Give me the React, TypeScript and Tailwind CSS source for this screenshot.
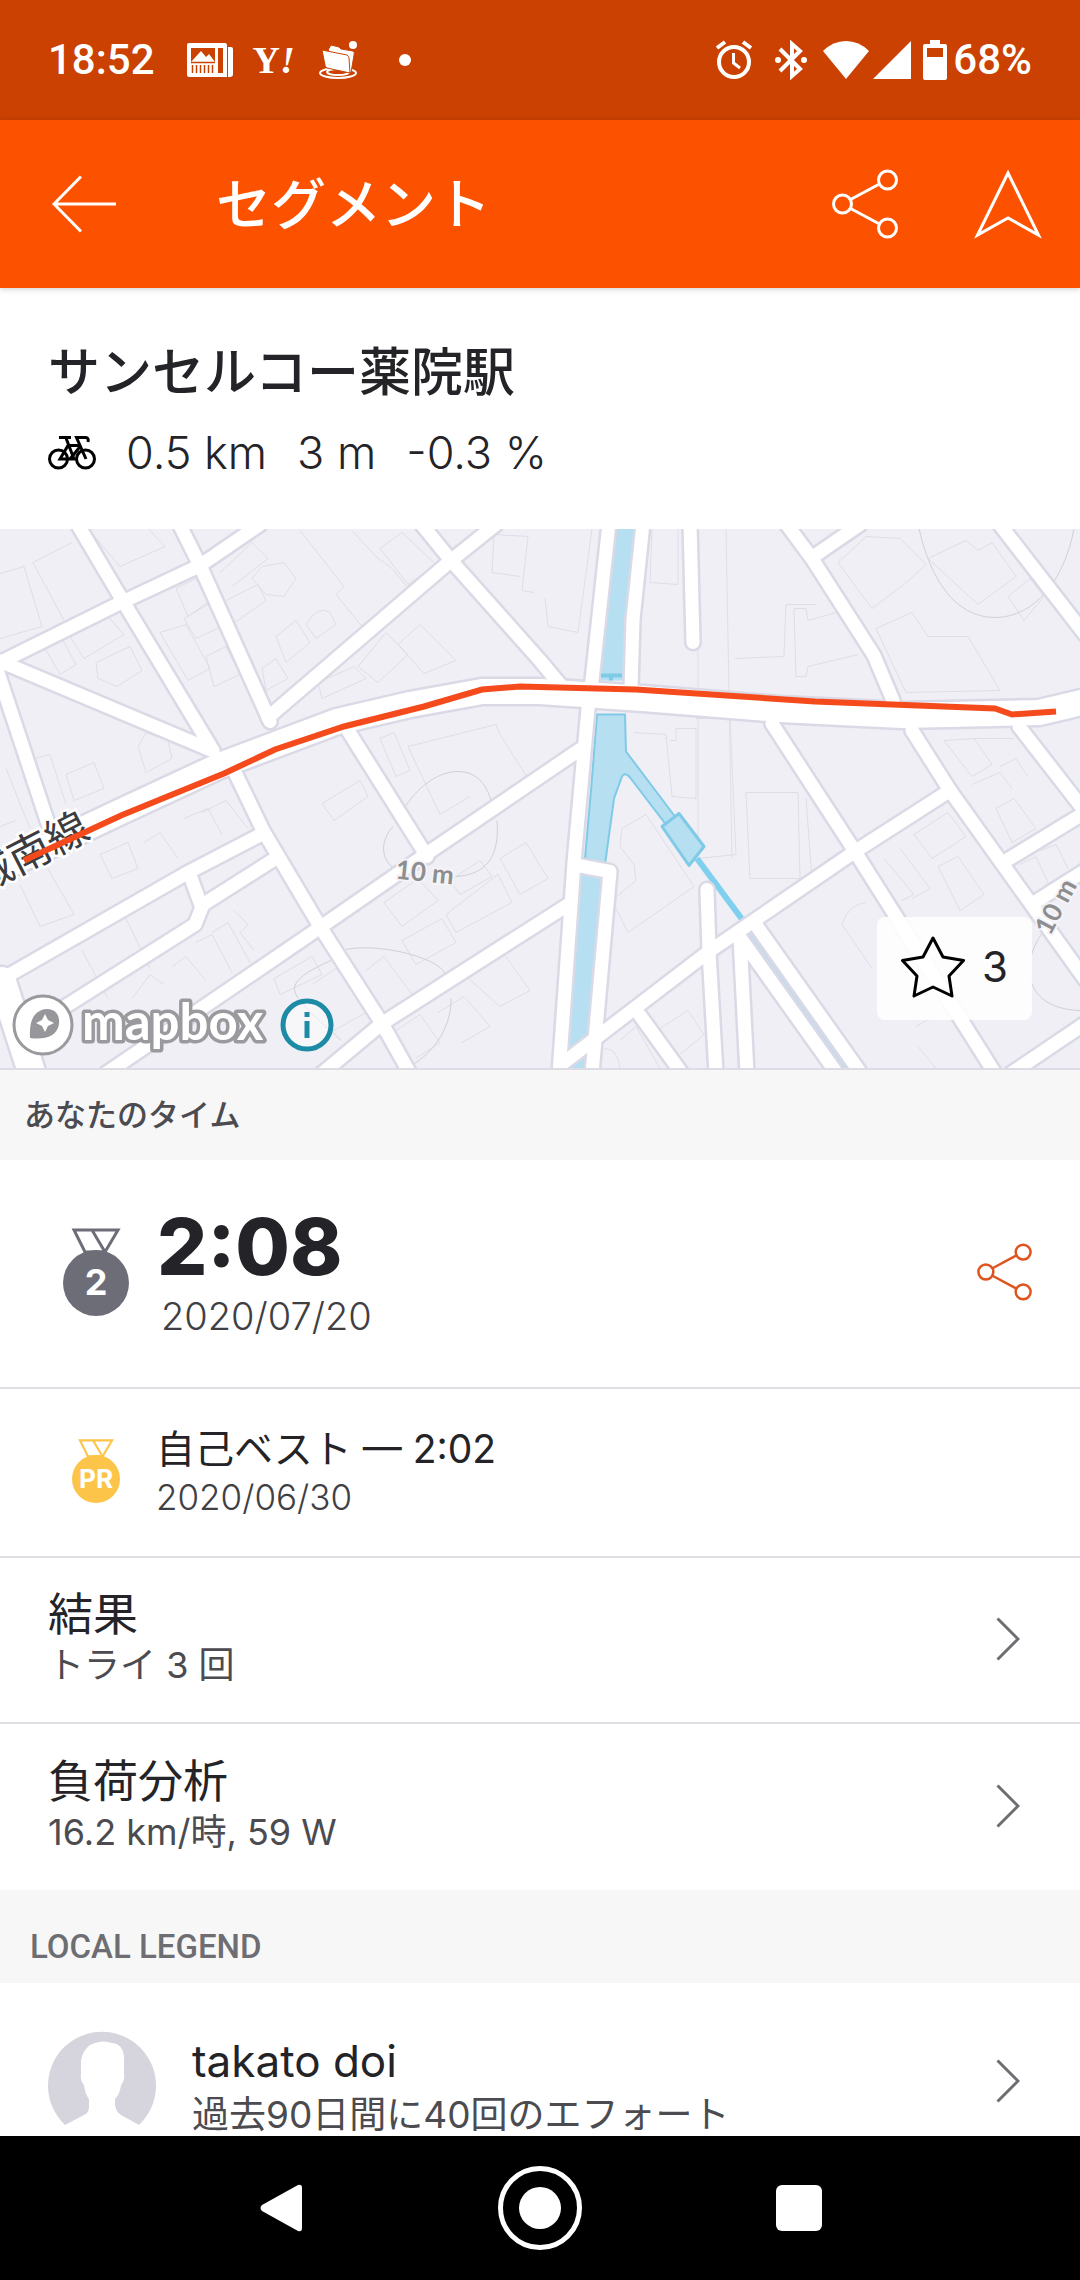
import type { ReactNode } from "react";

type EffortRow = {
	title: string;
	detail: string;
};

const effortRows: EffortRow[] = [
	{ title: "結果", detail: "トライ 3 回" },
	{ title: "負荷分析", detail: "16.2 km/時, 59 W" },
];

const sideStreets = [
	"M77 -5 L122 71 L213 222",
	"M236 246 L263 302 L320 398 L382 495 L410 545",
	"M179 -5 L200 37 L270 193",
	"M0 134 L117 76 L200 37 L260 -4",
	"M-4 131 L212 222",
	"M-4 138 L48 295",
	"M268 189 L451 32 L496 -4",
	"M421 -5 L451 32 L540 132 L560 156",
	"M348 202 L427 328",
	"M-4 454 L188 344 L263 305",
	"M277 329 L203 376 L195 396 L40 494",
	"M189 344 L201 377",
	"M106 545 L320 399 L427 325 L580 221",
	"M322 545 L382 495 L570 375",
	"M609 -5 L592 152 L588 180 L574 334 L559 545",
	"M643 -5 L633 91 L631 160",
	"M578 337 L610 343 L592 545",
	"M690 -5 L693 114",
	"M786 -5 L812 30 L874 127 L893 172",
	"M812 29 L860 -4",
	"M999 -5 L1085 106",
	"M772 195 L855 323 L995 545",
	"M912 202 L950 262 L1085 451",
	"M1019 198 L1085 283",
	"M950 262 L855 323 L709 423 L560 537",
	"M1008 331 L1085 284",
	"M1036 373 L1085 342",
	"M1011 545 L1085 495",
	"M707 361 L709 423 L716 545",
	"M740 409 L747 545",
	"M740 409 L837 545",
	"M757 398 L861 545",
	"M640 487 L682 545",
];

const mainStreet =
	"M-10 345 L121 283 L220 237 L337 193 L410 176 L482 163 L540 163 L643 170 L780 181 L902 187 L1039 184 L1090 172";

const route =
	"M24 332 L121 287 L165 269 L224 245 L275 221 L344 198 L424 178 L482 161 L520 158 L636 161 L815 173 L995 180 L1012 186 L1056 183";

const buildings = [
	"M33 34 L72 14 M33 34 L64 92 M0 45 L24 38 L42 98 L0 110",
	"M92 5 L120 38 L165 18 L148 0",
	"M70 108 L108 88 L124 106 L84 130 Z",
	"M96 134 L130 118 L142 142 L117 158 L98 150 Z M44 118 L62 110 L76 136 L60 146 Z",
	"M160 104 L186 96 L210 140 L188 152 Z M184 90 L208 76 L222 98 L196 110 Z",
	"M176 60 L196 50 L208 74 L188 88 Z M206 128 L226 118 L240 146 L214 158 Z",
	"M220 44 L252 14 L268 30 L232 58 M252 50 L262 38 L284 34 L296 50 L284 68 L266 66 Z",
	"M226 72 L258 56 L266 72 L232 96 M276 108 L296 92 L310 114 L286 134 Z",
	"M306 96 Q318 76 330 84 L336 96 L316 110 Z",
	"M358 138 L386 104 L408 126 L378 154 Z M398 116 L420 96 L456 132 L424 145 Z",
	"M318 154 L354 138 L366 150 L322 170 Z M262 140 L276 130 L288 150 L266 162 Z",
	"M300 2 L344 58 L336 66 L362 98 M352 2 L376 28 L392 40 L410 62",
	"M380 20 L402 4 L436 36 L408 56 Z M494 6 L528 8 L522 62 L534 64 M494 6 L492 44 L520 48",
	"M138 218 L146 204 L168 212 L172 230 L146 244 Z M66 246 L94 234 L104 260 L74 272 Z",
	"M6 240 L30 300 M18 234 L50 226 L66 276 M0 298 L16 292",
	"M184 290 L208 280 L222 306 M202 284 L226 272 L248 300 M144 314 L160 304 L178 330",
	"M100 326 L128 314 L138 340 L112 350 Z M20 356 L40 398 L74 386 L48 340",
	"M126 390 L150 440 M82 422 L108 470 M132 470 L150 446 L164 456 M172 438 L186 428 L206 452",
	"M196 414 L212 406 L232 444 M212 404 L228 394 L250 434 M234 382 L248 396 L240 404 L254 422",
	"M322 275 L360 252 L368 268 L334 292 Z M380 210 L394 204 L410 242 L396 248 Z",
	"M408 218 L496 196 L500 206 L528 250 M408 218 L440 286 L470 268",
	"M384 374 L418 350 L438 372 L402 398 Z M446 386 L498 346 L512 374 L456 404 Z",
	"M450 352 L480 332 L492 348 L460 366 Z M500 330 L526 314 L548 350 L520 366 Z",
	"M402 412 L442 390 L456 414 L416 436 Z M366 442 L384 428 L412 466 L392 480",
	"M274 450 L312 428 L322 446 L280 466 Z M312 456 L336 440 L370 482 L330 504",
	"M396 502 L420 486 L440 514 L416 530 M438 484 L464 468 L490 498 L462 514",
	"M462 444 L500 420 L530 462 L500 478 Z",
	"M545 70 L548 98 L578 104 L592 0 M652 0 L650 54 L678 56 L678 0",
	"M726 0 L732 330 M698 120 L698 330 L736 326 L730 190 L696 190",
	"M735 130 L784 128 L786 76 L816 76 M794 80 L806 80 L808 92 L836 84 M794 80 L796 148 L806 148 L808 138 L858 126",
	"M838 34 L866 8 L900 10 L926 36 L904 56 L872 80 Z M876 100 L912 84 L928 108 L968 108 L1000 162 L906 164 Z",
	"M928 30 L966 12 L978 22 L992 14 L1016 48 L978 76 Z M1008 68 L1030 50 L1044 68 L1024 92 Z",
	"M634 204 L666 206 L672 268 L696 270 L696 200 L676 200 L676 212 L670 212",
	"M746 264 L798 264 L800 350 L750 350 Z M806 270 L812 350 L838 324",
	"M622 300 L646 286 L694 358 L628 404 L612 372 L636 352 L634 336 L620 318 Z",
	"M944 212 L974 210 L992 236 L972 248 Z M974 210 L1014 210 M996 280 L1014 270 L1036 300 L1012 314 Z",
	"M972 256 L1000 244 L1012 260 M1000 238 L1016 230 L1028 248",
	"M914 306 L948 284 L966 308 L932 330 Z M938 338 L958 328 L984 366 L960 382 Z M884 330 L914 366 L902 372 M900 320 L930 360 L912 370",
	"M1020 336 L1036 328 L1048 354 L1036 366 M1040 322 L1056 316 L1068 340",
	"M842 396 Q848 376 866 374 M842 396 L872 440 M916 498 L950 478 L970 508 M918 518 L936 540",
	"M660 500 L688 482 L704 506 L680 526 M604 520 Q618 520 620 540 M620 512 L636 498 L660 540",
];

function ShareIcon({ className }: { className: string }): ReactNode {
	return (
		<svg
			viewBox="0 0 66 70"
			className={className}
			fill="none"
			stroke="currentColor"
			strokeWidth="3"
			aria-hidden="true"
		>
			<circle cx="10.5" cy="35" r="9" />
			<circle cx="55.5" cy="11" r="9" />
			<circle cx="55.5" cy="59" r="9" />
			<path d="M18.500 30.500 L47.500 15 M18.500 39.500 L47.500 55" />
		</svg>
	);
}

function ChevronIcon(): ReactNode {
	return (
		<svg
			viewBox="0 0 24 44"
			className="h-11 w-6 shrink-0 text-[#6d6d72]"
			fill="none"
			stroke="currentColor"
			strokeWidth="3"
			aria-hidden="true"
		>
			<path d="M1.500 1.500 L22 22 L1.500 42.500" />
		</svg>
	);
}

function BikeIcon(): ReactNode {
	return (
		<svg
			viewBox="0 0 48 34"
			className="h-[34px] w-12"
			fill="none"
			stroke="#000"
			strokeWidth="3"
			aria-hidden="true"
		>
			<circle cx="10.500" cy="23" r="9" />
			<circle cx="37.500" cy="23" r="9" />
			<path d="M11 1.500 H23" />
			<path d="M18 2 L26 23 H12 L20 9.500 H33" />
			<path d="M22 23 L33 9.500" />
			<path d="M38 23 L28.500 1.500 H38 Q41 2 40 6" />
		</svg>
	);
}

function StatusBar(): ReactNode {
	return (
		<div className="flex h-30 items-center justify-between bg-[#cb4102] px-12 font-['Roboto',sans-serif] text-[42px] leading-none font-medium text-white">
			<div className="flex items-center">
				<span>18:52</span>
				<svg viewBox="0 0 46 34" className="ml-8 h-[34px] w-[46px]" aria-hidden="true">
					<path
						fill="#fff"
						fillRule="evenodd"
						d="M2 0 H38 Q40 0 40 2 V34 H2 Q0 34 0 32 V2 Q0 0 2 0 Z M4 5 V19 H28 V5 Z M31 5 V30 H36 V5 Z"
					/>
					<path fill="#fff" d="M41 4 H44 Q46 4 46 6 V31 Q46 34 43 34 H41 Z" />
					<path fill="#fff" d="M4 19 L14 8 L19 14 L22 11 L28 19 Z" />
					<path
						stroke="#cb4102"
						strokeWidth="1.500"
						d="M5.500 22 V30 M9.500 22 V30 M13.500 22 V30 M17.500 22 V30 M21.500 22 V30 M25.500 22 V30 M4 19.500 H28"
					/>
				</svg>
				<span className="ml-5 font-['Liberation_Serif',serif] text-[38px] font-bold">
					Y<i>!</i>
				</span>
				<svg viewBox="0 0 38 38" className="ml-6 h-[38px] w-[38px]" aria-hidden="true">
					<g fill="none" stroke="#fff" strokeWidth="2">
						<ellipse cx="19" cy="32" rx="18" ry="5" />
						<ellipse cx="19" cy="31" rx="11" ry="3" />
					</g>
					<path
						fill="#fff"
						stroke="#cb4102"
						d="M9 9 L12 4 L20 6 L22 8 L34 10 Q36 11 35 14 L32 32 L28 30 Z"
					/>
					<path fill="#fff" stroke="#cb4102" d="M3 9 L28 14 Q30 15 30 17 L31 32 L8 27 Q6 26 6 24 Z" />
					<circle cx="34" cy="4" r="4" fill="#fff" />
				</svg>
				<span className="ml-[42px] size-3 rounded-full bg-white" />
			</div>
			<div className="flex items-center">
				<svg
					viewBox="0 0 38 40"
					className="h-10 w-[38px]"
					fill="none"
					stroke="#fff"
					strokeWidth="4"
					aria-hidden="true"
				>
					<circle cx="19" cy="22" r="15" />
					<path d="M18.500 13 V23 L25 28" strokeWidth="3" />
					<path d="M2 8 L10 2 M36 8 L28 2" />
				</svg>
				<svg
					viewBox="0 0 32 40"
					className="ml-[22px] h-10 w-8"
					fill="none"
					stroke="#fff"
					strokeWidth="4"
					aria-hidden="true"
				>
					<path d="M5 9 L25 29 L17 36 V4 L25 11 L5 31" />
					<circle cx="3" cy="20" r="3" fill="#fff" stroke="none" />
					<circle cx="29" cy="20" r="3" fill="#fff" stroke="none" />
				</svg>
				<svg viewBox="0 0 46 40" className="ml-4 h-10 w-[46px]" fill="#fff" aria-hidden="true">
					<path d="M0 11 Q10 1 23 1 Q36 1 46 11 L23 39 Z" />
				</svg>
				<svg viewBox="0 0 38 40" className="ml-1 h-10 w-[38px]" fill="#fff" aria-hidden="true">
					<path d="M0 39 L38 1 V39 Z" />
				</svg>
				<svg viewBox="0 0 24 40" className="ml-3 h-10 w-6" fill="#fff" aria-hidden="true">
					<path
						fillRule="evenodd"
						d="M7 0 H17 V4 H22 Q24 4 24 6 V38 Q24 40 22 40 H2 Q0 40 0 38 V6 Q0 4 2 4 H7 Z M4 8 V17 H20 V8 Z"
					/>
				</svg>
				<span className="ml-1.5">68%</span>
			</div>
		</div>
	);
}

function AppBar(): ReactNode {
	return (
		<header className="relative z-10 flex h-42 items-center bg-[#fc5200] pr-[38px] pl-[52px] text-white shadow-[0_1px_6px_rgba(0,0,0,0.2)]">
			<button type="button" aria-label="戻る">
				<svg
					viewBox="0 0 64 58"
					className="h-[58px] w-16"
					fill="none"
					stroke="currentColor"
					strokeWidth="3"
					aria-hidden="true"
				>
					<path d="M64 29 H2 M29 1.500 L2 29 L29 56.500" />
				</svg>
			</button>
			<h1 className="ml-25 flex-1 text-[55px] leading-none font-medium">セグメント</h1>
			<button type="button" aria-label="共有">
				<ShareIcon className="h-[70px] w-[66px]" />
			</button>
			<button type="button" aria-label="ナビ" className="ml-19">
				<svg
					viewBox="0 0 68 70"
					className="h-[70px] w-[68px]"
					fill="none"
					stroke="currentColor"
					strokeWidth="3"
					aria-hidden="true"
				>
					<path d="M34 4 L64.500 66 L34 49 L3.500 66 Z" />
				</svg>
			</button>
		</header>
	);
}

function SegmentMap(): ReactNode {
	return (
		<div className="relative h-[541px] overflow-hidden border-b-2 border-[#dddce5] bg-[#efeff5]">
			<svg
				viewBox="0 0 1080 540"
				preserveAspectRatio="xMidYMid slice"
				className="h-full w-full"
				fill="none"
				role="img"
				aria-label="セグメントの地図"
			>
				<g stroke="#dfdee6" strokeWidth="1">
					{buildings.map((d) => (
						<path key={d} d={d} />
					))}
				</g>
				<g stroke="#d0d0d6" strokeWidth="1">
					<path d="M396 341 C380 332 380 312 393 298 M406 277 C420 256 440 243 458 243 C478 243 488 258 492 276 M497 292 C500 330 485 346 456 348" />
					<path d="M346 421 C380 414 444 430 446 448 M451 470 C452 500 430 530 406 539 M331 432 C290 450 290 460 300 472 C316 492 330 500 341 512" />
					<path d="M919 0 C930 50 955 89 995 89 C1035 89 1065 50 1074 0" />
					<path d="M1046 400 C1020 430 1020 480 1080 482" />
				</g>
				<g fill="#b6dff2">
					<path d="M616 0 H637 L626 84 L625 152 H599 Z" />
					<path
						stroke="#7fcae6"
						strokeWidth="2"
						d="M597 186 H625 L626 223 L675 288 L666 296 L630 249 Q625 243 622 248 L614 270 L605 336 L585 330 L591 262 Z"
					/>
					<path
						stroke="#7fcae6"
						strokeWidth="3"
						strokeLinejoin="round"
						d="M662 298 L679 285 L704 318 L689 337 Z"
					/>
					<path d="M581 345 H603 L585 540 H565 Z" />
				</g>
				<path stroke="#7fd0ee" strokeWidth="6" d="M697 330 L746 396" />
				<path stroke="#c6dbec" strokeWidth="11" d="M751 400 L849 545" />
				<g stroke="#dad9e6" strokeWidth="18" strokeLinecap="round" strokeLinejoin="round">
					{sideStreets.map((d) => (
						<path key={d} d={d} />
					))}
					<path d="M2 452 L32 545" strokeWidth="32" />
					<path d={mainStreet} strokeWidth="30" />
				</g>
				<g stroke="#fff" strokeWidth="13" strokeLinecap="round" strokeLinejoin="round">
					{sideStreets.map((d) => (
						<path key={d} d={d} />
					))}
					<path d="M2 452 L32 545" strokeWidth="27" />
					<path d={mainStreet} strokeWidth="25" />
				</g>
				<path stroke="#7fcae6" strokeWidth="4" d="M601 147 H622 M611 147 V152" />
				<text
					transform="translate(-20 366) rotate(-27)"
					className="font-['Noto_Sans_CJK_JP',sans-serif] text-[42px]"
					fill="#3c3c40"
					stroke="#fff"
					strokeWidth="5"
					paintOrder="stroke"
				>
					城南線
				</text>
				<path stroke="#f54a1c" strokeWidth="6" d={route} />
				<g
					className="font-['Lato',sans-serif] text-[26px] font-bold"
					fill="#8e8e8e"
					stroke="#f4f4f8"
					strokeWidth="4"
					paintOrder="stroke"
				>
					<text transform="translate(395 350) rotate(6)">10 m</text>
					<text transform="translate(1050 408) rotate(-62)">10 m</text>
				</g>
			</svg>
			<div className="absolute bottom-1 left-3 flex items-center">
				<svg viewBox="0 0 62 62" className="size-[62px]" aria-hidden="true">
					<circle cx="31" cy="31" r="29" fill="#fff" stroke="#9a9a9e" strokeWidth="3" />
					<path fill="#97979b" d="M18 44 C17 26 22 16 35 15 C44 15 48 22 47 30 C45 43 32 46 18 44 Z" />
					<path fill="#fff" d="M33 20 L36 26 L42 29 L36 32 L33 38 L30 32 L24 29 L30 26 Z" />
				</svg>
				<svg viewBox="0 0 200 78" className="h-[78px] w-[200px]" aria-hidden="true">
					<text
						x="8"
						y="54"
						className="font-['Lato',sans-serif] text-[51px] font-bold"
						fill="#fff"
						stroke="#9a9a9e"
						strokeWidth="7"
						strokeLinejoin="round"
						paintOrder="stroke"
					>
						mapbox
					</text>
				</svg>
				<button type="button" aria-label="地図の情報" className="ml-1.5">
					<svg viewBox="0 0 54 54" className="size-[54px]" aria-hidden="true">
						<circle cx="27" cy="27" r="24" fill="#fff" fillOpacity="0.5" stroke="#1d8ba6" strokeWidth="5" />
						<path fill="#1d8ba6" d="M24.500 14 H29.500 V19 H24.500 Z M24.500 23 H29.500 V40 H24.500 Z" />
					</svg>
				</button>
			</div>
			<button
				type="button"
				className="absolute right-12 bottom-12 flex h-[103px] w-[155px] items-center justify-between rounded-lg bg-white/90 px-6 pb-1 font-['Inter',sans-serif] text-[42px] leading-none text-[#242428]"
			>
				<svg
					viewBox="0 0 64 62"
					className="h-[62px] w-16"
					fill="none"
					stroke="#000"
					strokeWidth="3"
					strokeLinejoin="round"
					aria-hidden="true"
				>
					<path d="M32 2 L42 21 L62.500 24.500 L48 40 L51 60 L32 51 L13 60 L16 40 L1.500 24.500 L22 21 Z" />
				</svg>
				<span>3</span>
			</button>
		</div>
	);
}

function MedalIcon({ label, className }: { label: string; className: string }): ReactNode {
	return (
		<svg viewBox="0 0 66 88" className={className} aria-hidden="true">
			<path
				fill="none"
				stroke="currentColor"
				strokeWidth="3"
				d="M11 2 H55 L42 24 H22 Z M29 2 L42 24"
			/>
			<circle cx="33" cy="55" r="33" fill="currentColor" />
			<text
				x="33"
				y="67"
				textAnchor="middle"
				fill="#fff"
				className="font-['Inter',sans-serif] text-[36px] font-bold"
			>
				{label}
			</text>
		</svg>
	);
}

function NavigationBar(): ReactNode {
	return (
		<nav className="h-36 bg-black">
			<div className="mx-auto grid h-full max-w-[776px] grid-cols-3 place-items-center">
				<button type="button" aria-label="戻る">
					<svg viewBox="0 0 44 48" className="h-12 w-11" fill="#fff" aria-hidden="true">
						<path d="M39 1 Q43 0 43 4 V44 Q43 48 39 47 L3 27 Q0 24 3 21 Z" />
					</svg>
				</button>
				<button type="button" aria-label="ホーム">
					<svg viewBox="0 0 84 84" className="size-[84px]" aria-hidden="true">
						<circle cx="42" cy="42" r="39.500" fill="none" stroke="#fff" strokeWidth="5" />
						<circle cx="42" cy="42" r="21" fill="#fff" />
					</svg>
				</button>
				<button type="button" aria-label="最近のアプリ" className="size-[46px] rounded-md bg-white" />
			</div>
		</nav>
	);
}

export default function App(): ReactNode {
	return (
		<div className="bg-white font-['Inter','Noto_Sans_CJK_JP',sans-serif] text-[#242428]" lang="ja">
			<StatusBar />
			<AppBar />

			<main>
				<section className="px-12 pt-[57px] pb-12">
					<h2 className="text-[52px] leading-14 font-medium">サンセルコー薬院駅</h2>
					<div className="mt-6 flex items-center gap-[30px] text-[45px] leading-14 font-light">
						<BikeIcon />
						<span>0.5 km</span>
						<span>3 m</span>
						<span>-0.3 %</span>
					</div>
				</section>

				<SegmentMap />

				<h3 className="flex h-[90px] items-center bg-[#f7f7f8] px-6 text-[31px] font-medium text-[#4b4b50]">
					あなたのタイム
				</h3>
				<div className="flex h-[229px] items-center border-b-2 border-[#dfdfe3] pr-12 pb-1 pl-[63px]">
					<MedalIcon label="2" className="h-[88px] w-[66px] shrink-0 text-[#6d6d78]" />
					<div className="ml-7 flex-1">
						<p className="text-[79px] leading-20 font-extrabold">2:08</p>
						<p className="mt-2 pl-1 text-[38px] leading-11 font-light text-[#3f3f44]">2020/07/20</p>
					</div>
					<button type="button" aria-label="記録を共有" className="text-[#e0531c]">
						<ShareIcon className="h-[58px] w-[55px]" />
					</button>
				</div>
				<div className="flex h-[169px] items-center border-b-2 border-[#dfdfe3] pr-12 pb-1 pl-[72px]">
					<MedalIcon label="PR" className="h-16 w-12 shrink-0 text-[#fcc549]" />
					<div className="ml-9">
						<p className="text-[39px] leading-13">自己ベスト — 2:02</p>
						<p className="text-[35px] leading-11 font-light text-[#3f3f44]">2020/06/30</p>
					</div>
				</div>
				{effortRows.map((row, i) => (
					<a
						key={row.title}
						href="#"
						className={`flex h-[166px] items-center justify-between pr-15 pb-0.5 pl-12 ${i === 0 ? "border-b-2 border-[#dfdfe3]" : ""}`}
					>
						<div>
							<p className="text-[45px] leading-13">{row.title}</p>
							<p className="text-[36px] leading-12 text-[#4b4b50]">{row.detail}</p>
						</div>
						<ChevronIcon />
					</a>
				))}

				<h3 className="flex h-[93px] items-center bg-[#f7f7f8] px-[30px] pt-5 font-['Roboto',sans-serif] text-[33px] font-medium text-[#6d6d72]">
					LOCAL LEGEND
				</h3>
				<a href="#" className="flex h-[153px] items-start overflow-hidden pt-12 pr-15 pl-12">
					<svg viewBox="0 0 108 108" className="size-[108px] shrink-0" aria-hidden="true">
						<path
							fill="#d6d5de"
							d="M17 94 A54 54 0 1 1 91 94 L73 84 Q68 81 67 74 V68 Q72 63 73 54 Q77 50 76 42 V26 Q75 13 64 12 Q54 8 42 14 Q34 20 33 30 V42 Q32 50 36 54 Q37 63 41 68 V76 Q41 82 36 84 Z"
						/>
					</svg>
					<div className="ml-9 flex-1 pt-1">
						<p className="text-[44px] leading-13">takato doi</p>
						<p className="text-[37px] leading-14 text-[#4b4b50]">過去90日間に40回のエフォート</p>
					</div>
					<span className="pt-7">
						<ChevronIcon />
					</span>
				</a>
			</main>

			<NavigationBar />
		</div>
	);
}
